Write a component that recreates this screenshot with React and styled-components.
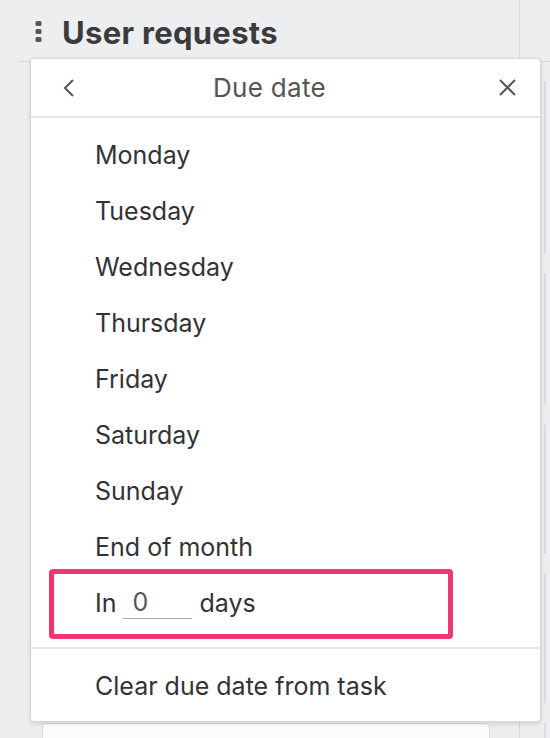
import React from 'react'
import styled, { createGlobalStyle } from 'styled-components'

const GlobalStyle = createGlobalStyle`
  html, body {
    margin: 0;
    padding: 0;
  }
  body {
    background: #edeef0;
    font-family: Inter, 'Liberation Sans', Arial, sans-serif;
    -webkit-font-smoothing: antialiased;
  }
`

const days = ['Monday', 'Tuesday', 'Wednesday', 'Thursday', 'Friday', 'Saturday', 'Sunday', 'End of month']
const cardHeights = [171, 130, 128, 129, 140]

const Page = styled.div`
  position: relative;
  width: 550px;
  height: 738px;
  overflow: hidden;
`

const Board = styled.div`
  display: flex;
  height: 100%;
  padding-left: 18px;
  box-sizing: border-box;
`

const Column = styled.div`
  flex: ${(p) => (p.$grow ? '1' : `0 0 ${p.$width}px`)};
  display: flex;
  flex-direction: column;
  border-right: ${(p) => (p.$grow ? 'none' : '1px solid #d9dadc')};
  min-width: 0;
`

const ColumnHeader = styled.div`
  height: 62px;
  flex: 0 0 62px;
  box-sizing: border-box;
  display: flex;
  align-items: center;
  gap: 20px;
  padding: 3px 0 0 17px;
  border-bottom: 1px solid #d7d8da;
`

const ColumnTitle = styled.h2`
  margin: 0;
  font-size: 31px;
  font-weight: 700;
  color: #3b3b3d;
  letter-spacing: 0.3px;
`

const CardList = styled.div`
  display: flex;
  flex-direction: column;
  gap: 19px;
  padding: 19px 29px 0 24px;
`

const Card = styled.div`
  height: ${(p) => p.$h}px;
  flex: 0 0 auto;
  background: ${(p) => (p.$tint ? '#e6ecf9' : '#fcfcfc')};
  border: 1px solid #dcdde0;
  border-radius: 4px;
`

const Popup = styled.div`
  position: absolute;
  left: 30px;
  top: 58px;
  width: 511px;
  box-sizing: border-box;
  background: #fff;
  border: 1px solid #d6d6d8;
  border-radius: 4px;
  box-shadow: 0 2px 5px rgba(0, 0, 0, 0.12);
  display: flex;
  flex-direction: column;
`

const PopupHeader = styled.div`
  height: 57px;
  display: flex;
  align-items: center;
  border-bottom: 2px solid #e4e4e6;
`

const IconButton = styled.button`
  flex: 0 0 60px;
  height: 100%;
  border: none;
  background: none;
  padding: 0;
  display: flex;
  align-items: center;
  justify-content: ${(p) => (p.$right ? 'flex-end' : 'flex-start')};
  padding-left: ${(p) => (p.$right ? '0' : '32px')};
  padding-right: ${(p) => (p.$right ? '24px' : '0')};
  box-sizing: border-box;
  color: #555;
`

const PopupTitle = styled.div`
  flex: 1;
  text-align: center;
  padding-right: 32px;
  font-size: 26px;
  letter-spacing: 0.3px;
  color: #555558;
`

const OptionList = styled.div`
  display: flex;
  flex-direction: column;
  padding: ${(p) => p.$pad};
`

const Option = styled.div`
  position: relative;
  height: 56px;
  display: flex;
  align-items: center;
  padding-left: 64px;
  font-size: 25px;
  color: #333335;

  ${(p) =>
    p.$highlight &&
    `
    &::after {
      content: '';
      position: absolute;
      left: 18px;
      top: -6px;
      bottom: -8px;
      width: 404px;
      border: 5px solid #ef3670;
      border-radius: 4px;
      box-sizing: border-box;
      pointer-events: none;
    }
  `}
`

const DaysInput = styled.span`
  display: inline-block;
  width: 60px;
  margin: 0 7px;
  padding-left: 9px;
  padding-bottom: 1px;
  border-bottom: 1.5px solid #a9a9ab;
  color: #555558;
`

const Divider = styled.div`
  height: 2px;
  background: #e4e4e6;
`

const Kebab = () => (
  <svg width="7" height="22" viewBox="0 0 7 22">
    <rect x="0.5" y="0" width="6" height="5" rx="1.5" fill="#57575a" />
    <rect x="0.5" y="8" width="6" height="5" rx="1.5" fill="#57575a" />
    <rect x="0.5" y="16" width="6" height="5" rx="1.5" fill="#57575a" />
  </svg>
)

const Chevron = () => (
  <svg width="11" height="18" viewBox="0 0 11 18">
    <polyline points="10,1 2,9 10,17" fill="none" stroke="#555" strokeWidth="2" />
  </svg>
)

const Close = () => (
  <svg width="17" height="17" viewBox="0 0 17 17">
    <path d="M1 1 L16 16 M16 1 L1 16" stroke="#555" strokeWidth="2" />
  </svg>
)

export default function App() {
  return (
    <Page>
      <GlobalStyle />
      <Board>
        <Column $width={501}>
          <ColumnHeader>
            <Kebab />
            <ColumnTitle>User requests</ColumnTitle>
          </ColumnHeader>
          <CardList>
            {cardHeights.map((h, i) => (
              <Card key={i} $h={h} />
            ))}
          </CardList>
        </Column>
        <Column $grow>
          <ColumnHeader />
          <CardList>
            {cardHeights.map((h, i) => (
              <Card key={i} $h={h} $tint={i === 4} />
            ))}
          </CardList>
        </Column>
      </Board>

      <Popup>
        <PopupHeader>
          <IconButton>
            <Chevron />
          </IconButton>
          <PopupTitle>Due date</PopupTitle>
          <IconButton $right>
            <Close />
          </IconButton>
        </PopupHeader>
        <OptionList $pad="9px 0 16px">
          {days.map((d) => (
            <Option key={d}>{d}</Option>
          ))}
          <Option $highlight>
            In<DaysInput>0</DaysInput>days
          </Option>
        </OptionList>
        <Divider />
        <OptionList $pad="9px 0 7px">
          <Option>Clear due date from task</Option>
        </OptionList>
      </Popup>
    </Page>
  )
}
